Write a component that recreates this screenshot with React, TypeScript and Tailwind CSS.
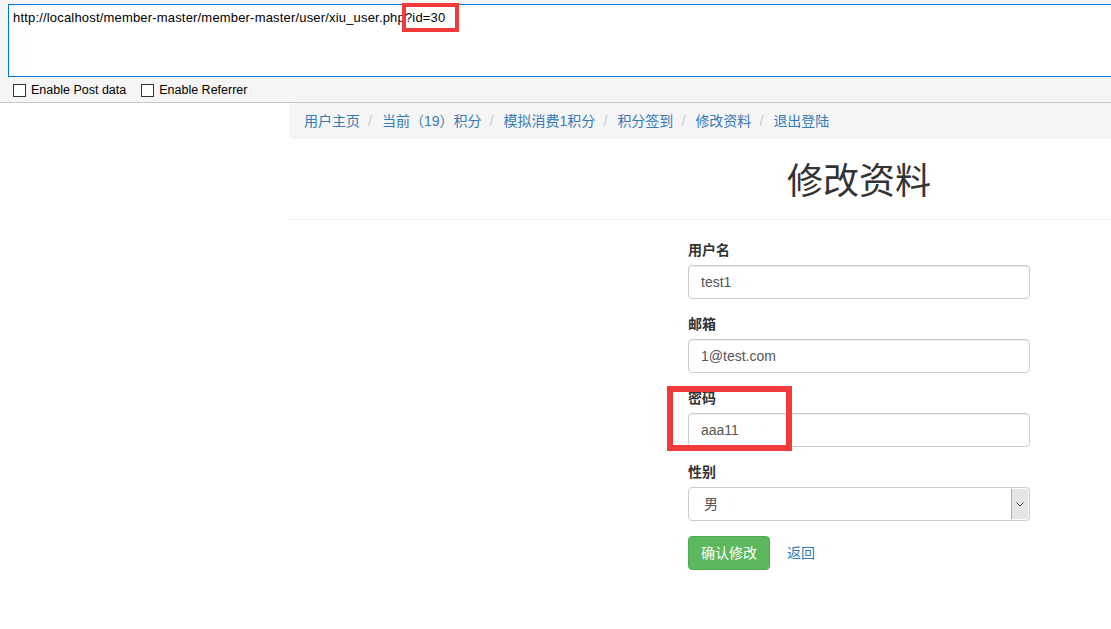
import React from "react";

const bs = { fontFamily: '"Liberation Sans", Arial, "Noto Sans CJK SC", sans-serif' };
const ui = { fontFamily: '"Liberation Sans", "Noto Sans", "Noto Sans CJK SC", sans-serif' };

function Field({ label, value }: { label: string; value: string }) {
  return (
    <div className="mb-[15px]">
      <div className="h-[20px] leading-[20px] mb-[5px] text-[14px] font-bold text-[#333]">{label}</div>
      <div className="h-[34px] border border-[#ccc] rounded-[4px] px-[12px] leading-[32px] text-[14px] text-[#555] bg-white shadow-[inset_0_1px_1px_rgba(0,0,0,0.075)]">
        {value}
      </div>
    </div>
  );
}

export default function App() {
  const crumbs = ["用户主页", "当前（19）积分", "模拟消费1积分", "积分签到", "修改资料", "退出登陆"];
  return (
    <div className="w-[1111px] h-[629px] overflow-hidden bg-white relative">
      {/* toolbar */}
      <div className="h-[103px] bg-[#f5f5f5] border-b border-[#c6c6c6] pt-[4px] pl-[8px]" style={ui}>
        <div className="h-[73px] border border-[#0078d7] border-r-0 bg-white pl-[4px] pt-[5px] text-[13px] leading-[16px] tracking-[0.18px] text-[#000] whitespace-nowrap">
          http://localhost/member-master/member-master/user/xiu_user.php?id=30
        </div>
        <div className="h-[25px] pt-[2px] flex items-center pl-[5px] text-[12.5px] text-[#000]">
          <span className="w-[13px] h-[13px] border border-[#333] bg-white inline-block" />
          <span className="ml-[5px]">Enable Post data</span>
          <span className="ml-[15px] w-[13px] h-[13px] border border-[#333] bg-white inline-block" />
          <span className="ml-[5px]">Enable Referrer</span>
        </div>
      </div>

      {/* page */}
      <div className="pl-[289px]" style={bs}>
        <div className="w-[1140px]">
          <div className="h-[36px] bg-[#f5f5f5] rounded-[4px] px-[15px] flex items-center text-[14px]">
            {crumbs.map((c, i) => (
              <React.Fragment key={c}>
                {i > 0 && <span className="w-[22px] pl-[8px] text-[#ccc]">/</span>}
                <span className="text-[#337ab7]">{c}</span>
              </React.Fragment>
            ))}
          </div>
          <div className="mt-[19px] h-[40px] leading-[40px] text-center text-[36px] text-[#333] font-normal" style={{ fontFamily: '"Noto Sans CJK SC", sans-serif' }}>
            修改资料
          </div>
          <div className="mt-[21px] border-t border-[#eee]" />
          <div className="ml-[399px] w-[342px] mt-[20px]">
            <Field label="用户名" value="test1" />
            <Field label="邮箱" value="1@test.com" />
            <Field label="密码" value="aaa11" />
            <div className="mb-[15px]">
              <div className="h-[20px] leading-[20px] mb-[5px] text-[14px] font-bold text-[#333]">性别</div>
              <div className="h-[34px] border border-[#ccc] rounded-[4px] flex bg-white overflow-hidden">
                <div className="flex-1 pl-[15px] leading-[32px] text-[14px] text-[#555]">男</div>
                <div className="w-[17px] m-[1px] bg-[#e6e6e6] border-l border-[#adadad] flex items-center justify-center">
                  <svg width="8" height="5" viewBox="0 0 8 5">
                    <polyline points="0.5,0.5 4,4 7.5,0.5" fill="none" stroke="#444" strokeWidth="1" />
                  </svg>
                </div>
              </div>
            </div>
            <div className="flex items-center">
              <div className="h-[34px] px-[12px] bg-[#5cb85c] border border-[#4cae4c] rounded-[4px] text-white text-[14px] leading-[32px]">
                确认修改
              </div>
              <div className="ml-[17px] text-[14px] text-[#337ab7]">返回</div>
            </div>
          </div>
        </div>
      </div>

      {/* annotations */}
      <div className="absolute left-[402px] top-[3px] w-[57px] h-[29px] border-[4px] border-[#f23a3a]" />
      <div className="absolute left-[667px] top-[386px] w-[125px] h-[65px] border-[6px] border-[#f23a3a]" />
    </div>
  );
}
